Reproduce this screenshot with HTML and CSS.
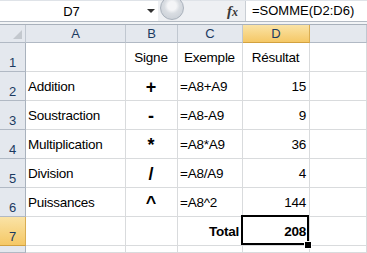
FILE: index.html
```html
<!DOCTYPE html>
<html lang="fr">
<head>
    <meta charset="UTF-8">
    <title>Opérateurs</title>
    <link rel="stylesheet" href="styles.css">
</head>
<body>

    <!-- Formula bar -->
    <div class="formula-bar">
        <div class="name-box">
            <span class="cell-ref">D7</span>
            <span class="arrow"></span>
        </div>
        <div class="splitter"></div>
        <div class="fx">f<span>x</span></div>
        <div class="formula">=SOMME(D2:D6)</div>
    </div>
    <div class="bar-gap"></div>

    <!-- Sheet -->
    <div class="sheet">
        <div class="head corner"><span class="corner-mark"></span></div>
        <div class="head col-head">A</div>
        <div class="head col-head">B</div>
        <div class="head col-head">C</div>
        <div class="head col-head selected">D</div>
        <div class="head col-head last"></div>

        <div class="head row-head">1</div>
        <div class="cell"></div>
        <div class="cell center">Signe</div>
        <div class="cell center">Exemple</div>
        <div class="cell center">Résultat</div>
        <div class="cell"></div>

        <div class="head row-head">2</div>
        <div class="cell">Addition</div>
        <div class="cell sym">+</div>
        <div class="cell">=A8+A9</div>
        <div class="cell right">15</div>
        <div class="cell"></div>

        <div class="head row-head">3</div>
        <div class="cell">Soustraction</div>
        <div class="cell sym">-</div>
        <div class="cell">=A8-A9</div>
        <div class="cell right">9</div>
        <div class="cell"></div>

        <div class="head row-head">4</div>
        <div class="cell">Multiplication</div>
        <div class="cell sym">*</div>
        <div class="cell">=A8*A9</div>
        <div class="cell right">36</div>
        <div class="cell"></div>

        <div class="head row-head">5</div>
        <div class="cell">Division</div>
        <div class="cell sym">/</div>
        <div class="cell">=A8/A9</div>
        <div class="cell right">4</div>
        <div class="cell"></div>

        <div class="head row-head">6</div>
        <div class="cell">Puissances</div>
        <div class="cell sym">^</div>
        <div class="cell">=A8^2</div>
        <div class="cell right">144</div>
        <div class="cell"></div>

        <div class="head row-head selected">7</div>
        <div class="cell"></div>
        <div class="cell"></div>
        <div class="cell right bold">Total</div>
        <div class="cell right bold total">208</div>
        <div class="cell"></div>

        <div class="head row-head"></div>
        <div class="cell"></div>
        <div class="cell"></div>
        <div class="cell"></div>
        <div class="cell"></div>
        <div class="cell"></div>
    </div>

</body>
</html>
```

FILE: styles.css
```css
/* --- Base --- */
* {
    box-sizing: border-box;
}

body {
    margin: 0;
    background-color: #fff;
    font-family: "Liberation Sans", Arial, sans-serif;
    color: #000;
    overflow: hidden;
}

/* --- Formula bar --- */
.formula-bar {
    display: flex;
    height: 22px;
    background-color: #eef0f3;
    border-top: 1px solid #dfe3e8;
    border-bottom: 1px solid #b3bac3;
}

.name-box {
    width: 158px;
    background-color: #fff;
    display: flex;
    align-items: center;
}

.cell-ref {
    width: 143px;
    text-align: center;
    font-size: 13px;
}

.arrow {
    width: 0;
    height: 0;
    margin-left: 4px;
    border-left: 4px solid transparent;
    border-right: 4px solid transparent;
    border-top: 4px solid #333;
}

.splitter {
    width: 24px;
    height: 24px;
    margin: -5px 0 0 2px;
    border-radius: 50%;
    border: 1px solid #aab2bc;
    background: radial-gradient(circle at 50% 40%, #f4f5f7 0 25%, #d9dde2 45%, #c3c9d1 100%);
}

.fx {
    width: 61px;
    display: flex;
    align-items: center;
    justify-content: flex-end;
    padding-right: 7px;
    font-family: "Liberation Serif", serif;
    font-style: italic;
    font-weight: bold;
    font-size: 15px;
    color: #3a3a3a;
}

.fx span {
    font-size: 12px;
    margin-top: 3px;
}

.formula {
    flex: 1;
    background-color: #fff;
    border-left: 1px solid #c9ced4;
    padding-left: 6px;
    font-size: 13px;
    line-height: 20px;
}

.bar-gap {
    height: 3px;
    background-color: #f2f4f6;
    border-bottom: 1px solid #a9b1bb;
}

/* --- Sheet grid --- */
.sheet {
    display: grid;
    grid-template-columns: 26px 100px 52px 65px 67px 1fr;
    grid-template-rows: 18px repeat(7, 29px) 1fr;
    height: 228px;
}

.head {
    display: flex;
    justify-content: center;
    background-color: #e4e8ee;
    color: #1b3a61;
    font-size: 13px;
    border-right: 1px solid #c0c7d0;
    border-bottom: 1px solid #b1b9c4;
}

.col-head {
    align-items: center;
}

.row-head {
    align-items: flex-end;
    padding-bottom: 1px;
    border-right-color: #a9b2bd;
}

.head.selected {
    background: linear-gradient(#fae3a6, #f5c866);
    border-right-color: #d9ad52;
    border-bottom-color: #d2a13f;
}

.corner {
    position: relative;
}

.corner-mark {
    position: absolute;
    right: 3px;
    bottom: 3px;
    width: 0;
    height: 0;
    border-left: 9px solid transparent;
    border-bottom: 9px solid #c3c8ce;
}

.cell {
    display: flex;
    align-items: flex-end;
    padding: 0 3px 5px 2px;
    border-right: 1px solid #d9dbdd;
    border-bottom: 1px solid #d9dbdd;
    font-size: 13.5px;
    letter-spacing: -0.25px;
    line-height: 16px;
    white-space: nowrap;
}

.center { justify-content: center; }
.right { justify-content: flex-end; }
.bold { font-weight: bold; }

.sym {
    justify-content: center;
    font-weight: bold;
    font-size: 18px;
    letter-spacing: 0;
}

/* active cell */
.total {
    position: relative;
}

.total::after {
    content: "";
    position: absolute;
    top: -2px;
    left: -2px;
    right: 0;
    bottom: 0;
    border: 2px solid #000;
}

.total::before {
    content: "";
    position: absolute;
    right: -3px;
    bottom: -4px;
    width: 6px;
    height: 6px;
    background-color: #000;
    border: 1px solid #fff;
    z-index: 1;
}
```
